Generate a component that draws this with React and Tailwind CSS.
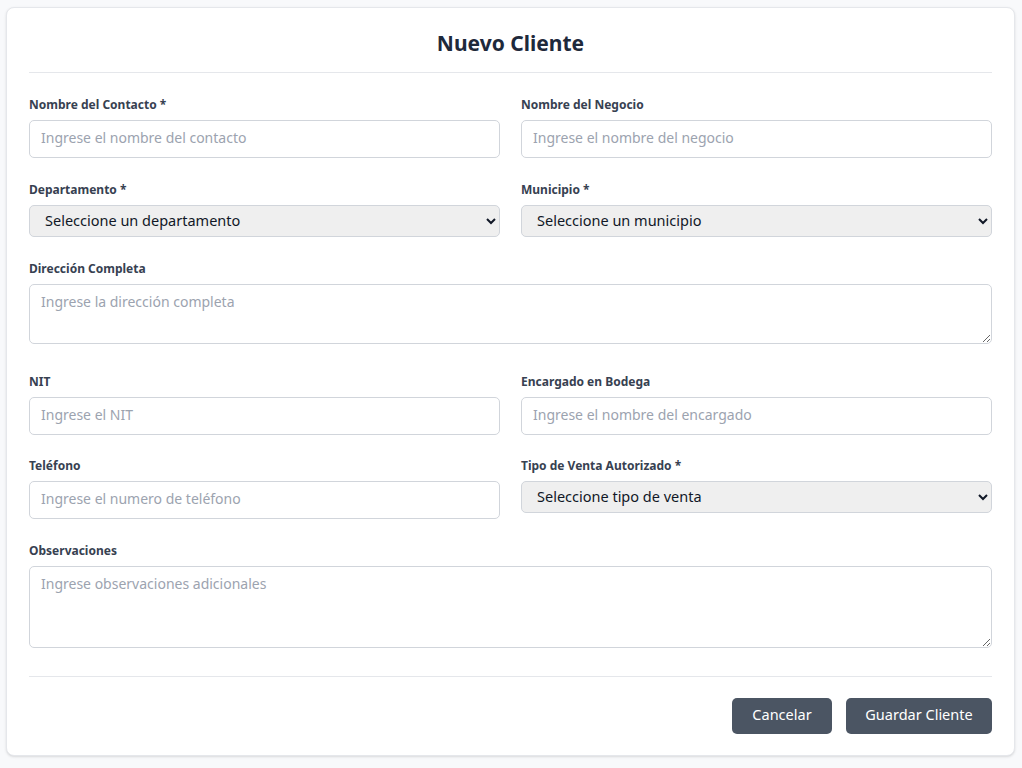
import React from 'react';

const FONT = { fontFamily: '"Noto Sans", "Open Sans", sans-serif' };

function Label({ children }) {
  return (
    <label className="block h-5 pt-px text-[12px] leading-5 font-bold text-[#374151] mb-[6px]">{children}</label>
  );
}

function TextInput({ placeholder }) {
  return (
    <input
      type="text"
      placeholder={placeholder}
      className="block w-full h-[38px] px-[11px] pb-[3px] text-[14px] text-[#111827] bg-white border border-[#d1d5db] rounded-[5px] placeholder:text-[#9ca3af] outline-none"
    />
  );
}

function Select({ children }) {
  return (
    <select className="block w-full h-[32px] pl-[11px] pr-[6px] pb-[2px] text-[14.5px] text-[#111827] bg-[#efefef] border border-[#d1d5db] rounded-[5px] outline-none">
      <option>{children}</option>
    </select>
  );
}

function TextArea({ placeholder, height, gap = 'pb-[6px]' }) {
  return (
    <div className={gap}>
      <textarea
        placeholder={placeholder}
        className={`block w-full ${height} px-[11px] pt-[6px] pb-[7px] text-[14px] text-[#111827] bg-white border border-[#d1d5db] rounded-[5px] placeholder:text-[#9ca3af] outline-none resize-y`}
      />
    </div>
  );
}

export default function App() {
  return (
    <div className="min-h-[768px] bg-[#f8f9fb] pl-[6px] pr-[7px] pt-[7px] pb-[11px]" style={FONT}>
      <div className="bg-white border border-[#e5e7eb] rounded-[8px] shadow-sm px-[22px] pt-[19px] pb-[21px]">
        <h1 className="text-[21px] leading-8 font-bold text-center text-[#1e293b] pb-[13px] border-b border-[#e5e7eb]">
          Nuevo Cliente
        </h1>

        <form className="pt-[21px] flex flex-col gap-[21px]" onSubmit={(e) => e.preventDefault()}>
          <div className="grid grid-cols-2 gap-x-[21px]">
            <div>
              <Label>Nombre del Contacto *</Label>
              <TextInput placeholder="Ingrese el nombre del contacto" />
            </div>
            <div>
              <Label>Nombre del Negocio</Label>
              <TextInput placeholder="Ingrese el nombre del negocio" />
            </div>
          </div>

          <div className="grid grid-cols-2 gap-x-[21px]">
            <div>
              <Label>Departamento *</Label>
              <Select>Seleccione un departamento</Select>
            </div>
            <div>
              <Label>Municipio *</Label>
              <Select>Seleccione un municipio</Select>
            </div>
          </div>

          <div>
            <Label>Dirección Completa</Label>
            <TextArea placeholder="Ingrese la dirección completa" height="h-[60px]" />
          </div>

          <div className="grid grid-cols-2 gap-x-[21px]">
            <div>
              <Label>NIT</Label>
              <TextInput placeholder="Ingrese el NIT" />
            </div>
            <div>
              <Label>Encargado en Bodega</Label>
              <TextInput placeholder="Ingrese el nombre del encargado" />
            </div>
          </div>

          <div className="grid grid-cols-2 gap-x-[21px] -mt-px">
            <div>
              <Label>Teléfono</Label>
              <TextInput placeholder="Ingrese el numero de teléfono" />
            </div>
            <div>
              <Label>Tipo de Venta Autorizado *</Label>
              <Select>Seleccione tipo de venta</Select>
            </div>
          </div>

          <div>
            <Label>Observaciones</Label>
            <TextArea placeholder="Ingrese observaciones adicionales" height="h-[82px]" gap="pb-[7px]" />
          </div>

          <div className="border-t border-[#e5e7eb] pt-[21px] flex justify-end gap-[14px]">
            <button type="button" className="h-[36px] w-[100px] pb-[2px] rounded-[5px] bg-[#4b5563] text-white text-[14.5px]">
              Cancelar
            </button>
            <button type="submit" className="h-[36px] w-[146px] pb-[2px] rounded-[5px] bg-[#4b5563] text-white text-[14.5px]">
              Guardar Cliente
            </button>
          </div>
        </form>
      </div>
    </div>
  );
}
